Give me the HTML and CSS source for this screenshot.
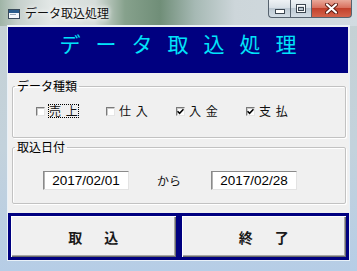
FILE: index.html
```html
<!DOCTYPE html>
<html lang="ja">
<head>
    <meta charset="UTF-8">
    <title>データ取込処理</title>
    <link rel="stylesheet" href="styles.css">
</head>
<body>
    <div class="window">
        <div class="titlebar">
            <svg class="title-icon" width="13" height="12" viewBox="0 0 13 12">
                <rect x="0.5" y="1.5" width="11" height="9" fill="#f4f8fb" stroke="#3a4a5a"/>
                <rect x="1" y="2" width="10" height="3" fill="#2a5c8c"/>
                <rect x="2" y="6" width="6" height="1" fill="#9ab"/>
            </svg>
            <span class="title-text">データ取込処理</span>
            <div class="controls">
                <div class="ctl min">
                    <svg width="10" height="5" viewBox="0 0 10 5"><rect x="0.5" y="0.5" width="9" height="4" fill="#fff" stroke="#3c4650"/></svg>
                </div>
                <div class="ctl max">
                    <svg width="10" height="9" viewBox="0 0 10 9"><rect x="0.5" y="0.5" width="9" height="8" fill="none" stroke="#3c4650"/><rect x="1.5" y="1.5" width="7" height="6" fill="none" stroke="#fff"/><rect x="2.5" y="3.5" width="5" height="3" fill="none" stroke="#3c4650"/></svg>
                </div>
                <div class="ctl close">
                    <svg width="13" height="11" viewBox="0 0 13 11">
                        <path d="M2 1.5 L11 9.5 M11 1.5 L2 9.5" stroke="#5a1a10" stroke-width="4" stroke-linecap="round"/>
                        <path d="M2 1.5 L11 9.5 M11 1.5 L2 9.5" stroke="#fff" stroke-width="2.2" stroke-linecap="round"/>
                    </svg>
                </div>
            </div>
        </div>

        <div class="frame">
            <div class="client">
                <div class="header">データ取込処理</div>

                <fieldset class="group kinds">
                    <legend>データ種類</legend>
                    <div class="check-row">
                        <div class="check-item">
                            <span class="box"></span>
                            <span class="check-label focused">売 上</span>
                        </div>
                        <div class="check-item">
                            <span class="box"></span>
                            <span class="check-label">仕 入</span>
                        </div>
                        <div class="check-item">
                            <span class="box checked">
                                <svg width="7" height="7" viewBox="0 0 7 7"><path d="M0.5 3.2 L2.6 5.4 L6.5 1.2" fill="none" stroke="#000" stroke-width="1.6"/></svg>
                            </span>
                            <span class="check-label">入 金</span>
                        </div>
                        <div class="check-item">
                            <span class="box checked">
                                <svg width="7" height="7" viewBox="0 0 7 7"><path d="M0.5 3.2 L2.6 5.4 L6.5 1.2" fill="none" stroke="#000" stroke-width="1.6"/></svg>
                            </span>
                            <span class="check-label">支 払</span>
                        </div>
                    </div>
                </fieldset>

                <fieldset class="group dates">
                    <legend>取込日付</legend>
                    <div class="date-row">
                        <input type="text" class="date-input" value="2017/02/01">
                        <span class="date-sep">から</span>
                        <input type="text" class="date-input" value="2017/02/28">
                    </div>
                </fieldset>

                <div class="actions">
                    <button class="action-btn">取　込</button>
                    <button class="action-btn">終　了</button>
                </div>
            </div>
        </div>
    </div>
</body>
</html>
```

FILE: styles.css
```css
body {
    margin: 0;
    font-family: "Noto Sans CJK JP", "Liberation Sans", sans-serif;
}

.window {
    width: 357px;
    height: 271px;
    display: flex;
    flex-direction: column;
    background: linear-gradient(180deg, #c6d1d3 0%, #c3d2dc 55%, #b6cde6 100%);
    overflow: hidden;
}

/* title bar */
.titlebar {
    height: 26px;
    flex-shrink: 0;
    display: flex;
    align-items: flex-start;
    background: linear-gradient(90deg, #9fb4a6 0px, #c6d0cc 18px, #e2e7e6 50px, #d6ddda 95px, #86a18c 125px, #708e78 160px, #a6b9b4 195px, #cdd6da 235px, #d2dbe1 357px);
}

.title-icon {
    margin: 8px 4px 0 8px;
}

.title-text {
    font-size: 12px;
    line-height: 14px;
    margin-top: 6px;
    color: #111;
    text-shadow: 0 0 4px #fff, 0 0 6px #fff;
}

.controls {
    margin-left: auto;
    margin-right: 5px;
    display: flex;
}

.ctl {
    height: 18px;
    box-sizing: border-box;
    display: flex;
    align-items: center;
    justify-content: center;
    border: 1px solid #56626e;
    border-top: none;
    background: linear-gradient(180deg, #eef2f5 0%, #d9e1e7 45%, #bcc8d2 50%, #d3dde5 100%);
}

.ctl.min {
    width: 22px;
    border-radius: 0 0 0 4px;
    border-right: none;
    align-items: flex-end;
    padding-bottom: 3px;
}

.ctl.max {
    width: 22px;
}

.ctl.close {
    width: 40px;
    border-left: none;
    border-radius: 0 0 4px 0;
    background: linear-gradient(180deg, #e9a99a 0%, #d9715f 45%, #c2412c 50%, #d4634b 100%);
}

/* window body */
.frame {
    flex: 1;
    display: flex;
    padding: 0 8px 11px 8px;
}

.client {
    width: 341px;
    box-sizing: border-box;
    padding-top: 1px;
    display: flex;
    flex-direction: column;
    background-color: #f0f0f0;
    box-shadow: 0 0 0 1px #e9f1f8;
}

.header {
    height: 46px;
    box-sizing: border-box;
    margin-right: 1px;
    padding-top: 6px;
    padding-left: 15px;
    background-color: #000080;
    color: #00e4fa;
    font-size: 21px;
    line-height: 21px;
    letter-spacing: 15px;
    text-align: center;
}

/* group boxes */
.group {
    margin: 0 3px 0 4px;
    padding: 0;
    box-sizing: border-box;
    border: 1px solid #c2c2c2;
    border-radius: 2px;
    box-shadow: inset 1px 1px 0 #fff, 1px 1px 0 #fff;
}

.group legend {
    margin-left: 2px;
    padding: 0 2px;
    font-size: 12px;
    line-height: 14px;
    color: #000;
}

.kinds {
    margin-top: 6px;
    height: 59px;
}

.dates {
    margin-top: 2px;
    height: 64px;
}

.check-row {
    display: grid;
    grid-template-columns: repeat(4, 70px);
    margin-top: 10px;
    padding-left: 23px;
}

.check-item {
    display: flex;
    align-items: center;
    height: 16px;
}

.box {
    width: 9px;
    height: 9px;
    box-sizing: border-box;
    display: flex;
    align-items: center;
    justify-content: center;
    background-color: #fff;
    border: 1px solid;
    border-color: #7a7a7a #e6e6e6 #e6e6e6 #7a7a7a;
    box-shadow: inset 1px 1px 0 #c8c8c8;
    margin-right: 3px;
}

.check-label {
    font-size: 12px;
    line-height: 12px;
    word-spacing: 2px;
    border: 1px dotted transparent;
    color: #111;
}

.check-label.focused {
    border-color: #000;
}

.date-row {
    display: flex;
    align-items: center;
    margin-top: 17px;
    padding-left: 30px;
}

.date-input {
    width: 86px;
    height: 19px;
    box-sizing: border-box;
    margin: 0;
    padding: 0;
    border: 1px solid;
    border-color: #8a8a8a #e3e3e3 #e3e3e3 #8a8a8a;
    box-shadow: inset 1px 0 0 #b4b4b4;
    background-color: #fff;
    font-family: "Liberation Sans", sans-serif;
    font-size: 13.5px;
    text-align: center;
    color: #000;
    outline: none;
}

.date-sep {
    margin: 0 30px 0 28px;
    font-size: 12px;
    color: #111;
}

/* buttons */
.actions {
    display: flex;
    height: 47px;
    margin-top: 9px;
}

.action-btn {
    flex: 1;
    margin: 0;
    padding: 0 0 0 4px;
    border: 3px solid #000080;
    background-color: #f0f0f0;
    box-shadow: inset 1px 1px 0 #fff, inset -1px -1px 0 #6a6a6a, inset -2px -2px 0 #a6a6a6;
    font-family: "Noto Sans CJK JP", sans-serif;
    font-size: 14px;
    font-weight: bold;
    letter-spacing: 4px;
    color: #1a1a1a;
}
```
